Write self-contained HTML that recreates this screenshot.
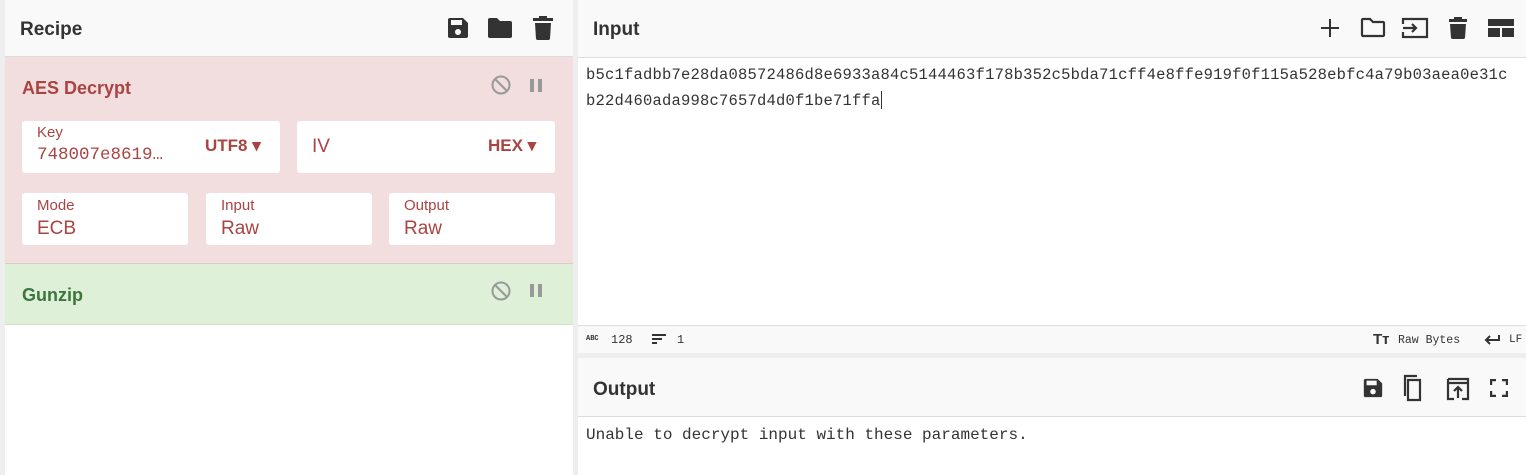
<!DOCTYPE html>
<html><head><meta charset="utf-8"><style>
*{box-sizing:border-box;margin:0;padding:0}
body{width:1526px;height:475px;background:#eeeeee;font-family:"Liberation Sans",sans-serif;position:relative;overflow:hidden}
.abs{position:absolute}
.hdr{background:#f9f9f9;border-bottom:1px solid #ddd}
.title{font-size:19px;font-weight:bold;color:#333}
.box{background:#fff;border-radius:3px;position:absolute}
.lbl{position:absolute;font-size:15px;color:#a94442}
.val{position:absolute;font-size:19px;color:#a94442}
.mono{font-family:"Liberation Mono",monospace}
svg{position:absolute}
</style></head><body>
<div class="abs" style="left:5px;top:0;width:568px;height:475px;background:#fff"></div>
<div class="abs hdr" style="left:5px;top:0;width:568px;height:57px"></div>
<div class="abs title" style="left:20px;top:19px">Recipe</div>
<svg style="left:446px;top:16px" width="24" height="24" viewBox="0 0 24 24"><path fill="#333" d="M2 4a2 2 0 0 1 2-2h13l5 5v13a2 2 0 0 1-2 2H4a2 2 0 0 1-2-2zM5 4v5h11V4zM12 13a3 3 0 1 0 0.01 0z"/></svg>
<svg style="left:487px;top:16px" width="26" height="24" viewBox="0 0 26 24"><path fill="#333" d="M1 4a2 2 0 0 1 2-2h7l3 3h10a2 2 0 0 1 2 2v13a2 2 0 0 1-2 2H3a2 2 0 0 1-2-2z"/></svg>
<svg style="left:532px;top:15px" width="22" height="26" viewBox="0 0 22 26"><path fill="#333" d="M7 1h8v2h6v3H1V3h6zM3 8h16l-1 16a2 2 0 0 1-2 1H6a2 2 0 0 1-2-1z"/></svg>

<div class="abs" style="left:5px;top:57px;width:568px;height:207px;background:#f2dede;border-bottom:1px solid #e0c8c8"></div>
<div class="abs" style="left:22px;top:78px;font-size:18px;font-weight:bold;color:#a94442">AES Decrypt</div>
<svg style="left:491px;top:75px" width="20" height="20" viewBox="0 0 20 20"><circle cx="10" cy="10" r="8.5" fill="none" stroke="#999" stroke-width="2"/><path d="M4 4l12 12" stroke="#999" stroke-width="2"/></svg>
<div class="abs" style="left:530px;top:79px;width:4px;height:13px;background:#999"></div>
<div class="abs" style="left:538px;top:79px;width:4px;height:13px;background:#999"></div>
<div class="box" style="left:22px;top:121px;width:258px;height:52px"></div>
<div class="lbl" style="left:37px;top:124px">Key</div>
<div class="val mono" style="left:37px;top:145px;font-size:17.5px">748007e8619…</div>
<div class="val" style="left:205px;top:136px;font-weight:bold;font-size:17px">UTF8 ▾</div>
<div class="box" style="left:297px;top:121px;width:258px;height:52px"></div>
<div class="val" style="left:312px;top:136px">IV</div>
<div class="val" style="left:488px;top:136px;font-weight:bold;font-size:17px">HEX ▾</div>
<div class="box" style="left:22px;top:193px;width:166px;height:52px"></div>
<div class="lbl" style="left:37px;top:197px">Mode</div><div class="val" style="left:37px;top:218px">ECB</div>
<div class="box" style="left:206px;top:193px;width:166px;height:52px"></div>
<div class="lbl" style="left:221px;top:197px">Input</div><div class="val" style="left:221px;top:218px">Raw</div>
<div class="box" style="left:389px;top:193px;width:166px;height:52px"></div>
<div class="lbl" style="left:404px;top:197px">Output</div><div class="val" style="left:404px;top:218px">Raw</div>

<div class="abs" style="left:5px;top:264px;width:568px;height:61px;background:#dff0d8;border-bottom:1px solid #cfe0c8"></div>
<div class="abs" style="left:22px;top:285px;font-size:18px;font-weight:bold;color:#3c763d">Gunzip</div>
<svg style="left:491px;top:281px" width="20" height="20" viewBox="0 0 20 20"><circle cx="10" cy="10" r="8.5" fill="none" stroke="#999" stroke-width="2"/><path d="M4 4l12 12" stroke="#999" stroke-width="2"/></svg>
<div class="abs" style="left:530px;top:284px;width:4px;height:13px;background:#999"></div>
<div class="abs" style="left:538px;top:284px;width:4px;height:13px;background:#999"></div>

<div class="abs" style="left:578px;top:0;width:948px;height:475px;background:#fff"></div>
<div class="abs hdr" style="left:578px;top:0;width:948px;height:58px"></div>
<div class="abs title" style="left:593px;top:19px">Input</div>
<svg style="left:1319px;top:17px" width="22" height="22" viewBox="0 0 22 22"><path d="M11 2v18M2 11h18" stroke="#333" stroke-width="2"/></svg>
<svg style="left:1360px;top:16px" width="26" height="24" viewBox="0 0 26 24"><path fill="none" stroke="#333" stroke-width="2.2" d="M2 4a1 1 0 0 1 1-1h7l3 3h10a1 1 0 0 1 1 1v12a1 1 0 0 1-1 1H3a1 1 0 0 1-1-1z"/></svg>
<svg style="left:1401px;top:16px" width="28" height="24" viewBox="0 0 28 24"><path fill="none" stroke="#333" stroke-width="2.2" d="M2 8V3h24v18H2v-5M2 12h13M11 8l4 4-4 4"/></svg>
<svg style="left:1448px;top:16px" width="20" height="24" viewBox="0 0 20 24"><path fill="#333" d="M6 1h8v2h5v3H1V3h5zM2 8h16l-1 14a2 2 0 0 1-2 1H5a2 2 0 0 1-2-1z"/></svg>
<svg style="left:1488px;top:18px" width="26" height="22" viewBox="0 0 26 22"><path fill="#333" d="M0 1h26v7H0zM0 10h12v9H0zM14 10h12v9H14z"/></svg>
<div class="abs mono" style="left:586px;top:62px;font-size:15.5px;line-height:26px;color:#333;white-space:nowrap;letter-spacing:0.2px">b5c1fadbb7e28da08572486d8e6933a84c5144463f178b352c5bda71cff4e8ffe919f0f115a528ebfc4a79b03aea0e31c<br>b22d460ada998c7657d4d0f1be71ffa<span style="display:inline-block;width:1px;height:18px;background:#333;vertical-align:-4px"></span></div>
<div class="abs" style="left:578px;top:325px;width:948px;height:28px;background:#f9f9f9;border-top:1px solid #ddd"></div>
<div class="abs mono" style="left:586px;top:335px;font-size:7px;font-weight:bold;color:#333">ABC</div>
<div class="abs mono" style="left:611px;top:333px;font-size:12px;color:#333">128</div>
<svg style="left:652px;top:334px" width="16" height="12" viewBox="0 0 16 12"><path d="M0 1h14M0 5h10M0 9h5" stroke="#333" stroke-width="2"/></svg>
<div class="abs mono" style="left:677px;top:333px;font-size:12px;color:#333">1</div>
<div class="abs" style="left:1373px;top:331px;font-size:15px;font-weight:bold;color:#333">Tт</div>
<div class="abs mono" style="left:1398px;top:334px;font-size:11.5px;color:#333">Raw Bytes</div>
<svg style="left:1484px;top:334px" width="16" height="12" viewBox="0 0 16 12"><path fill="none" stroke="#333" stroke-width="2" d="M15 1v5H2M6 2L2 6l4 4"/></svg>
<div class="abs mono" style="left:1509px;top:334px;font-size:11px;color:#333">LF</div>
<div class="abs" style="left:578px;top:353px;width:948px;height:5px;background:#eee"></div>

<div class="abs hdr" style="left:578px;top:358px;width:948px;height:59px"></div>
<div class="abs title" style="left:593px;top:379px">Output</div>
<svg style="left:1362px;top:377px" width="22" height="22" viewBox="0 0 24 24"><path fill="#333" d="M2 4a2 2 0 0 1 2-2h13l5 5v13a2 2 0 0 1-2 2H4a2 2 0 0 1-2-2zM5 4v5h11V4zM12 13a3 3 0 1 0 0.01 0z"/></svg>
<svg style="left:1402px;top:374px" width="24" height="28" viewBox="0 0 24 28"><path fill="none" stroke="#333" stroke-width="2.2" d="M6 6h12v20H6zM3 22V2h12"/></svg>
<svg style="left:1446px;top:377px" width="24" height="24" viewBox="0 0 24 24"><path fill="none" stroke="#333" stroke-width="2.2" d="M2 2h20v20h-6M8 22H2V2M2 6h20M12 21v-10M8 14l4-4 4 4"/></svg>
<svg style="left:1490px;top:379px" width="18" height="18" viewBox="0 0 18 18"><path fill="none" stroke="#333" stroke-width="2.4" d="M1 6V1h5M12 1h5v5M17 12v5h-5M6 17H1v-5"/></svg>
<div class="abs mono" style="left:586px;top:426px;font-size:16px;color:#333">Unable to decrypt input with these parameters.</div>
</body></html>
